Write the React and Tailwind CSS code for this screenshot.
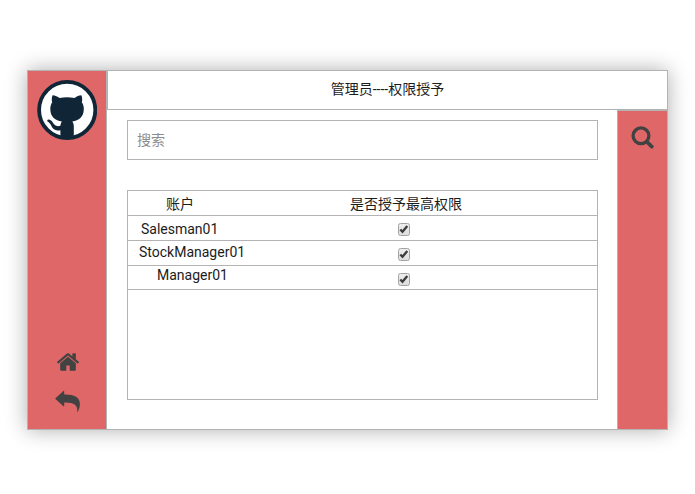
const accounts = [
  { name: 'Salesman01', cell: 'h-[25px]', label: 'pl-[13px] pt-[3px]' },
  { name: 'StockManager01', cell: 'h-[25px]', label: 'pl-[11px] pt-[1px]' },
  { name: 'Manager01', cell: 'h-[24px]', label: 'pl-[29px] leading-[18px]' },
];

function Avatar() {
  return (
    <svg className="h-[60px] w-[60px]" viewBox="0 0 60 60">
      <circle cx="30.200" cy="30" r="28.1" fill="#fff" stroke="#102636" strokeWidth="3.8" />
      <path
        fill="#102636"
        d="M15.6 15.2c2.600 0 5 1.500 7 2.700 4.800-1 10-1 14.800 0 2.200-1.300 4.500-2.700 7-2.700 1 2.300 1 5 .4 7 1.400 2 2.100 4.300 2 7-.2 8-5 11.200-11.500 12.200 1 1.300 1.500 3 1.500 5V56.800c-4.300 1.500-9.300 1.500-13.400 0V50.200c-5.500 1-7.700-1-9.200-4.700-.8-1.900-2-3-3.600-4-.8-.8-.2-1.900.8-1.900 2 0 3.500 1.400 4.700 3.500 1.700 2.900 4 3.600 7.300 2.600.2-1.900.7-3.300 1.500-4.300-6.600-1.100-11.400-4.200-11.600-12.200 0-2.700.6-5 1.900-7-.6-2-.6-4.700.4-7z"
      />
    </svg>
  );
}

function HomeIcon() {
  return (
    <svg className="h-[18px] w-[22px]" viewBox="23 238 1618 1314" fill="#424242">
      <path d="M1408 992v480q0 26-19 45t-45 19h-384v-384h-256v384h-384q-26 0-45-19t-19-45v-480q0-1 .5-3t.5-3l575-474 575 474q1 2 1 6zm223-69l-62 74q-8 9-21 11h-3q-13 0-21-7l-692-577-692 577q-12 8-24 7-13-2-21-11l-62-74q-8-10-7-23.5t11-21.5l719-599q32-26 76-26t76 26l244 204v-195q0-14 9-23t23-9h192q14 0 23 9t9 23v408l219 182q10 8 11 21.5t-7 23.5z" />
    </svg>
  );
}

function BackIcon() {
  return (
    <svg className="h-[23px] w-[26px]" viewBox="0 0 26 23" fill="#424242">
      <path d="M.5 8.200 8.400.9c.4-.3.8-.1.8.4v3.200c9.500-.3 15.700 2.600 15.700 9.300 0 3-.8 5.400-2 7.900-.3.500-.7.300-.6-.3.500-6-3-9-13.100-8.800v3.300c0 .5-.5.600-.8.300L.5 9c-.3-.3-.3-.5 0-.8z" />
    </svg>
  );
}

function SearchIcon() {
  return (
    <svg className="h-[24px] w-[24px]" viewBox="0 0 24 24" fill="none" stroke="#424242">
      <circle cx="10" cy="9.800" r="7.900" strokeWidth="3.300" />
      <path d="M16 15.900l4.800 4.700" strokeWidth="3.700" strokeLinecap="round" />
    </svg>
  );
}

function CheckedBox() {
  return (
    <span role="checkbox" aria-checked="true" className="mt-[7px] h-[13px] w-[12px] rounded-[2.5px] border border-[#a3a3a3] bg-linear-to-b from-[#eee] to-[#ddd]">
      <svg className="block h-[11px] w-[10px]" viewBox="0 0 10 11" fill="none" stroke="#3c3c3c" strokeWidth="2.300">
        <path d="M1.300 5.500l2.200 2.300L8.300 2" />
      </svg>
    </span>
  );
}

export default function App() {
  return (
    <div className="h-[494px] w-[695px] overflow-hidden bg-white pl-[27px] pt-[70px] font-['Roboto','Noto_Sans_CJK_SC',sans-serif] text-[14px] leading-[20px] text-[#1c1c1c]">
      <div className="flex h-[360px] w-[641px] border border-[#b3b3b3] bg-white shadow-[0_0_20px_rgba(0,0,0,0.32)]">
        <aside className="flex w-[79px] shrink-0 flex-col items-center border-r border-[#b3b3b3] bg-[#df6767] pt-[9px]">
          <Avatar />
          <div className="mt-auto flex flex-col items-center gap-[19px] pb-[16px] pl-px">
            <HomeIcon />
            <BackIcon />
          </div>
        </aside>
        <div className="flex min-w-0 grow flex-col">
          <header className="h-[39px] border-b border-l border-[#b3b3b3] pt-[8px] text-center">管理员----权限授予</header>
          <div className="flex grow">
            <main className="grow pl-[20px] pt-[10px]">
              <div className="flex h-[40px] w-[471px] items-center border border-[#b3b3b3] pl-[9px] text-[#8c8c8c]">搜索</div>
              <div className="mt-[30px] h-[210px] w-[471px] border border-[#b3b3b3]">
                <div className="flex h-[25px] border-b border-[#b3b3b3] pt-[3px]">
                  <span className="w-[222px] pl-[38px]">账户</span>
                  <span>是否授予最高权限</span>
                </div>
                {accounts.map((a) => (
                  <div key={a.name} className={`flex items-start border-b border-[#b3b3b3] ${a.cell}`}>
                    <span className={`w-[270px] shrink-0 ${a.label}`}>{a.name}</span>
                    <CheckedBox />
                  </div>
                ))}
              </div>
            </main>
            <aside className="flex w-[50px] shrink-0 justify-center border-l border-t border-[#b3b3b3] bg-[#df6767] pt-[15px]">
              <SearchIcon />
            </aside>
          </div>
        </div>
      </div>
    </div>
  );
}
